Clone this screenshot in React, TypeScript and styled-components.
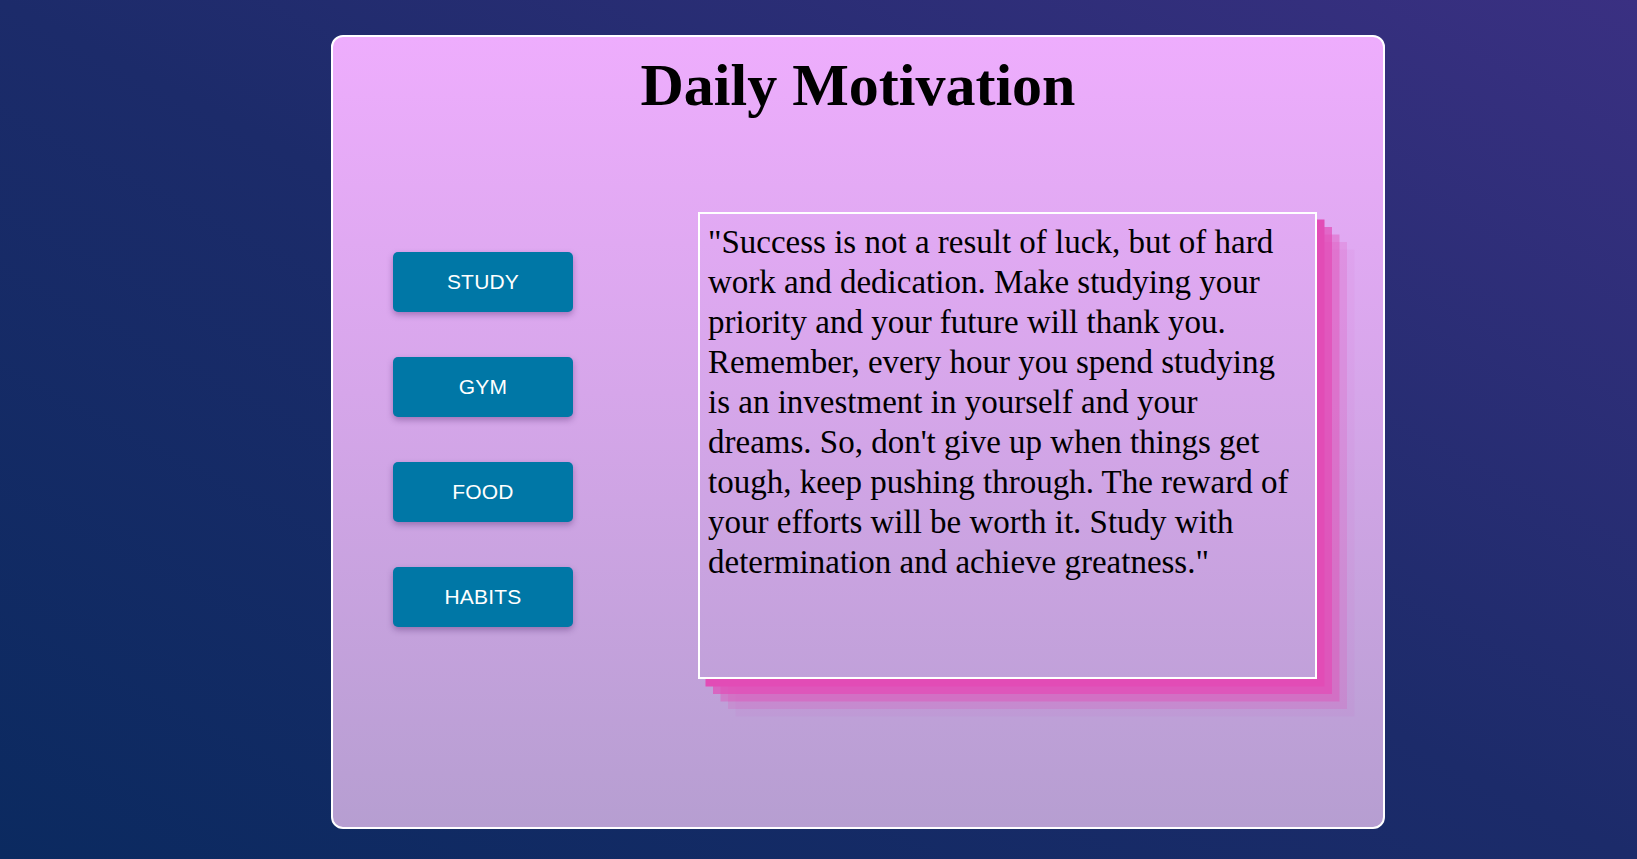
import React from "react";
import styled, { createGlobalStyle } from "styled-components";

const GlobalStyle = createGlobalStyle`
  html, body {
    margin: 0;
    padding: 0;
    height: 100%;
  }
  body {
    background: linear-gradient(to top right, #0b2a60 0%, #1c2b6a 50%, #3a3082 100%);
    font-family: "Liberation Serif", serif;
    overflow: hidden;
  }
  #root {
    height: 100%;
  }
`;

const Page = styled.div`
  width: 1637px;
  height: 859px;
  display: flex;
  justify-content: flex-start;
  padding-top: 35px;
  padding-left: 331px;
  box-sizing: border-box;
`;

const Card = styled.main`
  width: 1054px;
  height: 794px;
  box-sizing: border-box;
  border: 2px solid #ffffff;
  border-radius: 12px;
  background: linear-gradient(to bottom, #eeadfd 0%, #d6a6ea 45%, #b69ed1 100%);
  display: flex;
  flex-direction: column;
  align-items: center;
`;

const Title = styled.h1`
  margin: 16px 0 0;
  font-family: "Liberation Serif", serif;
  font-weight: 700;
  font-size: 60px;
  line-height: 64px;
  color: #000;
`;

const Body = styled.div`
  align-self: stretch;
  display: flex;
  align-items: flex-start;
  margin-top: 95px;
  padding-left: 60px;
`;

const ButtonColumn = styled.nav`
  display: flex;
  flex-direction: column;
  gap: 45px;
  margin-top: 40px;
  width: 180px;
`;

const TopicButton = styled.button`
  width: 180px;
  height: 60px;
  border: none;
  border-radius: 5px;
  background: #0077a6;
  color: #ffffff;
  font-family: "Liberation Sans", Arial, sans-serif;
  font-size: 21px;
  letter-spacing: 0.2px;
  text-transform: uppercase;
  box-shadow: 0 3px 6px rgba(60, 20, 90, 0.35);
  cursor: pointer;
`;

const QuoteBox = styled.blockquote`
  margin: 0 0 0 125px;
  width: 619px;
  height: 467px;
  box-sizing: border-box;
  border: 2px solid #ffffff;
  padding: 8px 20px 8px 8px;
  box-shadow:
    7.5px 7.5px 0 #e24cb6,
    15px 15px 0 rgba(226, 76, 182, 0.7),
    22.5px 22.5px 0 rgba(226, 76, 182, 0.42),
    30px 30px 0 rgba(226, 76, 182, 0.2),
    37.5px 37.5px 0 rgba(226, 76, 182, 0.06);
`;

const QuoteText = styled.p`
  margin: 0;
  font-family: "Liberation Serif", serif;
  font-size: 33px;
  line-height: 40px;
  color: #000;
`;

const topics = ["Study", "Gym", "Food", "Habits"];

const quote =
  "\"Success is not a result of luck, but of hard work and dedication. Make studying your priority and your future will thank you. Remember, every hour you spend studying is an investment in yourself and your dreams. So, don't give up when things get tough, keep pushing through. The reward of your efforts will be worth it. Study with determination and achieve greatness.\"";

export default function App() {
  return (
    <>
      <GlobalStyle />
      <Page>
        <Card>
          <Title>Daily Motivation</Title>
          <Body>
            <ButtonColumn>
              {topics.map((t) => (
                <TopicButton key={t}>{t}</TopicButton>
              ))}
            </ButtonColumn>
            <QuoteBox>
              <QuoteText>{quote}</QuoteText>
            </QuoteBox>
          </Body>
        </Card>
      </Page>
    </>
  );
}
